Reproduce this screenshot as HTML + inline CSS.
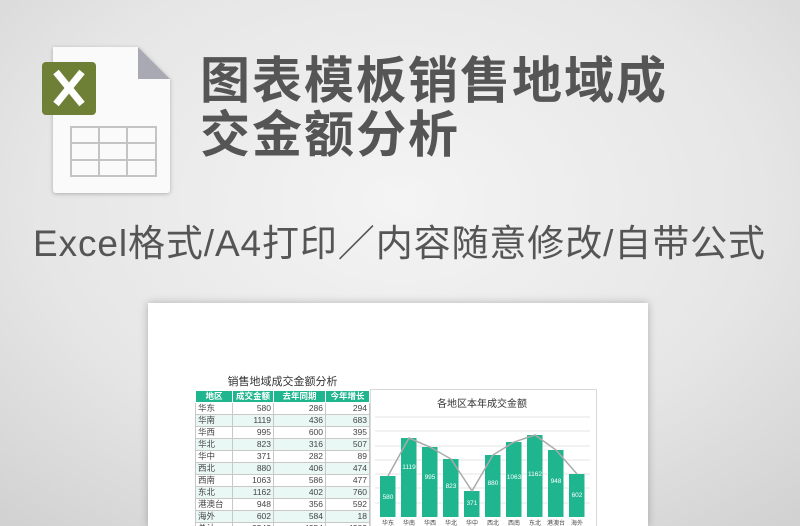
<!DOCTYPE html><html style="width:800px;height:526px;overflow:hidden"><head><meta charset="utf-8"><style>
body{margin:0;width:800px;height:526px;overflow:hidden;background:radial-gradient(ellipse 600px 420px at 400px 200px,#f4f4f4 0%,#e6e6e6 60%,#d2d2d2 100%);font-family:"Liberation Sans","Noto Sans CJK SC",sans-serif;position:relative}
.t{position:absolute;color:#555;font-weight:bold;font-size:50px;line-height:54px;left:200px;top:54px;letter-spacing:2px}
.s{position:absolute;left:33px;top:213px;font-size:37px;color:#555;white-space:nowrap;letter-spacing:0.9px}
.paper{position:absolute;left:148px;top:303px;width:500px;height:223px;background:#fff;box-shadow:0 0 8px rgba(0,0,0,.25)}
.clip{position:absolute;left:0;top:0;width:800px;height:526px;overflow:hidden}
table{position:absolute;left:195px;top:390px;border-collapse:collapse;font-size:8.5px;color:#444}
td{height:11px;padding:0 2px;border:1px solid #c8c8c8;line-height:11px;text-align:right}
td:first-child{text-align:left}
tr.h td{background:#1fb58f;color:#fff;text-align:center;font-weight:bold;border-color:#fff}
tr:nth-child(odd):not(.h) td{background:#e9f8f4}
</style></head><body><div class="clip">
<svg style="position:absolute;left:0;top:0" width="200" height="210">
<defs><filter id="f"><feDropShadow dx="0" dy="1" stdDeviation="2" flood-opacity=".25"/></filter></defs>
<path d="M53 47 H138 L170 79 V190 a3 3 0 0 1 -3 3 H56 a3 3 0 0 1 -3 -3 Z" fill="#fafafa" filter="url(#f)"/>
<path d="M138 47 V79 H170 Z" fill="#a9a9b3"/>
<rect x="42" y="62" width="54" height="53" rx="4" fill="#6d8035"/>
<path d="M56 72 L82 104 M82 72 L56 104" stroke="#fff" stroke-width="7"/>
<g stroke="#c4c4c4" stroke-width="2" fill="none"><rect x="71" y="127" width="85" height="49"/><path d="M71 143H156M71 160H156M99 127V176M127 127V176"/></g>
</svg>
<div class="t">图表模板销售地域成<br>交金额分析</div>
<div class="s">Excel格式/A4打印／内容随意修改/自带公式</div>
<div class="paper"></div>
<div style="position:absolute;left:195px;top:373px;width:175px;text-align:center;font-size:11px;color:#333">销售地域成交金额分析</div>
<table>
<tr class="h"><td style="width:32px">地区</td><td style="width:36px">成交金额</td><td style="width:47px">去年同期</td><td style="width:39px">今年增长</td></tr>
<tr><td>华东</td><td>580</td><td>286</td><td>294</td></tr>
<tr><td>华南</td><td>1119</td><td>436</td><td>683</td></tr>
<tr><td>华西</td><td>995</td><td>600</td><td>395</td></tr>
<tr><td>华北</td><td>823</td><td>316</td><td>507</td></tr>
<tr><td>华中</td><td>371</td><td>282</td><td>89</td></tr>
<tr><td>西北</td><td>880</td><td>406</td><td>474</td></tr>
<tr><td>西南</td><td>1063</td><td>586</td><td>477</td></tr>
<tr><td>东北</td><td>1162</td><td>402</td><td>760</td></tr>
<tr><td>港澳台</td><td>948</td><td>356</td><td>592</td></tr>
<tr><td>海外</td><td>602</td><td>584</td><td>18</td></tr>
<tr><td>总计</td><td>9543</td><td>4254</td><td>4289</td></tr>
</table>
<svg style="position:absolute;left:370px;top:389px" width="227" height="137" font-family="Liberation Sans,Noto Sans CJK SC,sans-serif">
<rect x="0.5" y="0.5" width="226" height="140" fill="#fff" stroke="#d8d8d8"/>
<text x="112" y="18" font-size="10" text-anchor="middle" fill="#333">各地区本年成交金额</text>
<g stroke="#e6e6e6"><path d="M5 28H220M5 42H220M5 57H220M5 71H220M5 85H220M5 99H220M5 114H220"/></g>
<g fill="#1fb58f">
<rect x="10" y="87" width="15.5" height="41"/><rect x="31" y="49" width="15.5" height="79"/><rect x="52" y="58" width="15.5" height="70"/><rect x="73" y="70" width="15.5" height="58"/><rect x="94" y="102" width="15.5" height="26"/><rect x="115" y="66" width="15.5" height="62"/><rect x="136" y="53" width="15.5" height="75"/><rect x="157" y="46" width="15.5" height="82"/><rect x="178" y="61" width="15.5" height="67"/><rect x="199" y="85" width="15.5" height="43"/></g>
<polyline points="18,87 39,49 60,58 81,70 102,102 123,66 144,53 165,46 186,61 207,85" fill="none" stroke="#aaa" stroke-width="1.5"/>
<g font-size="6.5" fill="#fff" text-anchor="middle"><text x="18" y="110">580</text><text x="39" y="80">1119</text><text x="60" y="90">995</text><text x="81" y="99">823</text><text x="102" y="116">371</text><text x="123" y="96">880</text><text x="144" y="90">1063</text><text x="165" y="87">1162</text><text x="186" y="94">948</text><text x="207" y="108">602</text></g>
<g font-size="6" fill="#444" text-anchor="middle"><text x="18" y="136">华东</text><text x="39" y="136">华南</text><text x="60" y="136">华西</text><text x="81" y="136">华北</text><text x="102" y="136">华中</text><text x="123" y="136">西北</text><text x="144" y="136">西南</text><text x="165" y="136">东北</text><text x="186" y="136">港澳台</text><text x="207" y="136">海外</text></g>
</svg>
</div></body></html>
